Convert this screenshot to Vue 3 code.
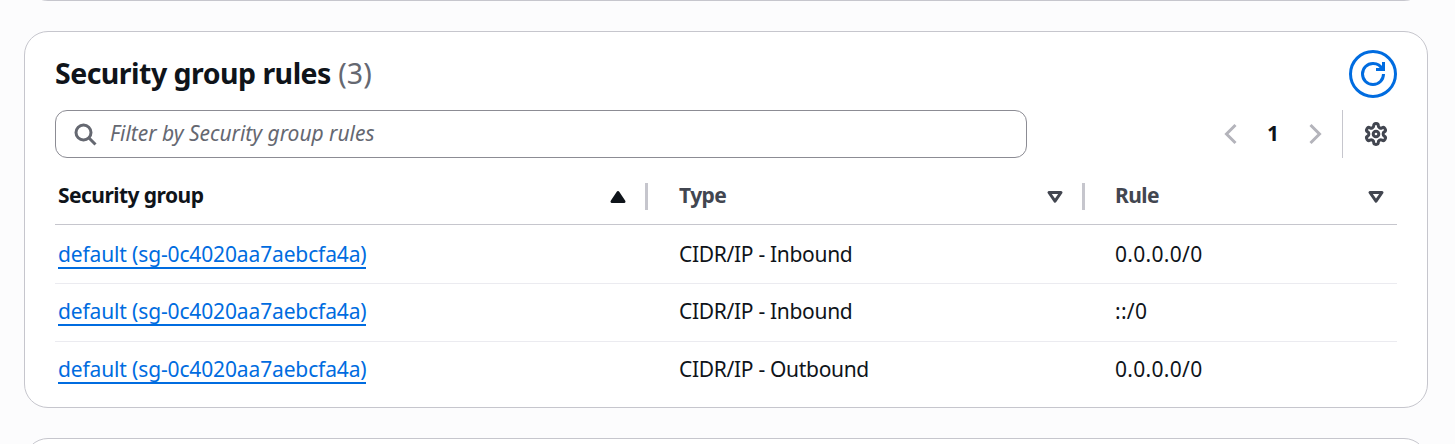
<script setup>
const columns = [
  { key: 'group', label: 'Security group', sort: 'asc', resizable: true },
  { key: 'type', label: 'Type', sort: 'none', resizable: true },
  { key: 'rule', label: 'Rule', sort: 'none', resizable: false },
]

const rows = [
  { id: 1, group: 'default (sg-0c4020aa7aebcfa4a)', type: 'CIDR/IP - Inbound', rule: '0.0.0.0/0' },
  { id: 2, group: 'default (sg-0c4020aa7aebcfa4a)', type: 'CIDR/IP - Inbound', rule: '::/0' },
  { id: 3, group: 'default (sg-0c4020aa7aebcfa4a)', type: 'CIDR/IP - Outbound', rule: '0.0.0.0/0' },
]
</script>

<template>
  <main class="page">
    <div class="panel panel-before"></div>

    <section class="panel rules">
      <header class="heading">
        <h2 class="title"><span class="title-text">Security group rules</span> <span class="count">(3)</span></h2>
        <button class="refresh" aria-label="Refresh">
          <svg class="icon" viewBox="0 0 16 16">
            <path d="M10 5h5V0" />
            <path d="M15 8a6.957 6.957 0 0 1-7 7 6.957 6.957 0 0 1-7-7 6.957 6.957 0 0 1 7-7 6.87 6.87 0 0 1 6.3 4" />
          </svg>
        </button>
      </header>

      <div class="tools">
        <label class="filter">
          <svg class="icon" viewBox="0 0 16 16">
            <circle cx="7" cy="7" r="5" />
            <path d="m15 15-4.5-4.5" />
          </svg>
          <span class="placeholder">Filter by Security group rules</span>
        </label>
        <nav class="pagination">
          <svg class="icon arrow" viewBox="0 0 16 16"><path d="M11 2 5 8l6 6" /></svg>
          <span class="current">1</span>
          <svg class="icon arrow" viewBox="0 0 16 16"><path d="m5 2 6 6-6 6" /></svg>
        </nav>
        <div class="preferences">
          <svg class="icon gear" viewBox="0.5 0.5 23 23">
            <path d="M12.22 2h-.44a2 2 0 0 0-2 2v.18a2 2 0 0 1-1 1.73l-.43.25a2 2 0 0 1-2 0l-.15-.08a2 2 0 0 0-2.73.73l-.22.38a2 2 0 0 0 .73 2.73l.15.1a2 2 0 0 1 1 1.72v.51a2 2 0 0 1-1 1.74l-.15.09a2 2 0 0 0-.73 2.73l.22.38a2 2 0 0 0 2.73.73l.15-.08a2 2 0 0 1 2 0l.43.25a2 2 0 0 1 1 1.73V20a2 2 0 0 0 2 2h.44a2 2 0 0 0 2-2v-.18a2 2 0 0 1 1-1.73l.43-.25a2 2 0 0 1 2 0l.15.08a2 2 0 0 0 2.73-.73l.22-.39a2 2 0 0 0-.73-2.73l-.15-.08a2 2 0 0 1-1-1.74v-.5a2 2 0 0 1 1-1.74l.15-.09a2 2 0 0 0 .73-2.73l-.22-.38a2 2 0 0 0-2.73-.73l-.15.08a2 2 0 0 1-2 0l-.43-.25a2 2 0 0 1-1-1.73V4a2 2 0 0 0-2-2z" />
            <circle cx="12" cy="12" r="2.7" />
          </svg>
        </div>
      </div>

      <div class="table">
        <div class="row head">
          <div v-for="col in columns" :key="col.key" class="th" :class="{ sorted: col.sort === 'asc' }">
            <span class="label">{{ col.label }}</span>
            <svg class="sort" viewBox="0 0 16 12">
              <path v-if="col.sort === 'asc'" class="solid" d="M8 1.5 2 10.5h12z" />
              <path v-else d="M2 1.5h12l-6 8.7z" />
            </svg>
            <i v-if="col.resizable" class="divider"></i>
          </div>
        </div>
        <div v-for="row in rows" :key="row.id" class="row body">
          <div class="td"><a class="link">{{ row.group }}</a></div>
          <div class="td type">{{ row.type }}</div>
          <div class="td rule">{{ row.rule }}</div>
        </div>
      </div>
    </section>

    <div class="panel panel-after"></div>
  </main>
</template>

<style>
body {
  margin: 0;
  background: #fcfcfd;
}
</style>

<style scoped>
.page {
  box-sizing: border-box;
  height: 444px;
  overflow: hidden;
  padding: 0 27px 0 24px;
  display: flex;
  flex-direction: column;
  gap: 30px;
  font-family: "Noto Sans", "Open Sans", sans-serif;
  font-size: 21px;
  line-height: 30px;
  color: #0f141a;
}
.panel {
  box-sizing: border-box;
  flex: none;
  background: #fff;
  border: 1px solid #c6c6cd;
  border-radius: 24px;
}
.panel-before {
  height: 60px;
  margin-top: -59px;
}
.panel-after {
  height: 60px;
}
.rules {
  height: 377px;
  padding: 18px 30px 0;
}
.heading {
  display: flex;
  justify-content: space-between;
  height: 48px;
}
.title {
  margin: 0;
  font-size: 28.5px;
  line-height: 36px;
  padding-top: 5px;
  font-weight: 700;
  white-space: nowrap;
}
.title-text {
  letter-spacing: -0.52px;
}
.count {
  font-weight: 400;
  color: #656871;
}
.icon {
  width: 24px;
  height: 24px;
  flex: none;
  overflow: visible;
  fill: none;
  stroke: currentColor;
  stroke-width: 2;
}
.refresh {
  box-sizing: border-box;
  width: 48px;
  height: 48px;
  padding: 0;
  display: flex;
  align-items: center;
  justify-content: center;
  border: 3px solid #006ce0;
  border-radius: 50%;
  background: #fff;
  color: #006ce0;
}
.tools {
  display: flex;
  height: 48px;
  margin-top: 12px;
}
.filter {
  box-sizing: border-box;
  width: 972px;
  display: flex;
  align-items: center;
  gap: 13px;
  padding-left: 17px;
  border: 1px solid #8c8c94;
  border-radius: 12px;
  color: #656871;
}
.placeholder {
  font-style: italic;
  white-space: nowrap;
  padding-bottom: 2px;
  letter-spacing: -0.02px;
}
.pagination {
  display: flex;
  align-items: center;
  margin-left: 192px;
}
.arrow {
  color: #b4b4bb;
}
.current {
  width: 60px;
  padding-bottom: 2px;
  text-align: center;
  font-weight: 700;
}
.preferences {
  box-sizing: border-box;
  margin-left: 15px;
  width: 55px;
  padding-left: 21px;
  border-left: 1px solid #c6c6cd;
  display: flex;
  align-items: center;
  color: #424650;
}
.gear {
  stroke-width: 2.9;
}
.table {
  padding-top: 10px;
}
.row {
  display: grid;
  grid-template-columns: 593px 437px 312px;
}
.head {
  height: 56px;
  border-bottom: 1px solid #c6c6cd;
}
.th {
  display: flex;
  height: 56px;
  align-items: center;
  color: #424650;
  font-weight: 700;
  white-space: nowrap;
  padding-left: 31px;
}
.th:first-child {
  padding-left: 3px;
}
.th:last-child {
  padding-left: 30px;
}
.label {
  padding-bottom: 2px;
  letter-spacing: -0.55px;
}
.sorted {
  color: #0f141a;
}
.sort {
  width: 16px;
  height: 12px;
  margin: 2px 19px 0 auto;
  overflow: visible;
  fill: none;
  stroke: currentColor;
  stroke-width: 3;
  stroke-linejoin: round;
}
.th:last-child .sort {
  margin-right: 13px;
}
.solid {
  fill: currentColor;
}
.divider {
  width: 3px;
  height: 27px;
  background: #c6c6cd;
}
.body {
  height: 57px;
  border-bottom: 1px solid #ebebf0;
}
.body:nth-child(2) {
  height: 58px;
}
.body:nth-child(2) .td {
  padding-top: 14px;
}
.body:last-child {
  border-bottom: 0;
}
.td {
  padding: 12px 0 0 31px;
  white-space: nowrap;
}
.td:first-child {
  padding-left: 3px;
}
.td:last-child {
  padding-left: 30px;
}
.type {
  letter-spacing: -0.31px;
}
.rule {
  letter-spacing: 0.3px;
}
.link {
  display: inline-block;
  height: 28px;
  border-bottom: 2px solid #006ce0;
  color: #006ce0;
  letter-spacing: -0.14px;
}
</style>
